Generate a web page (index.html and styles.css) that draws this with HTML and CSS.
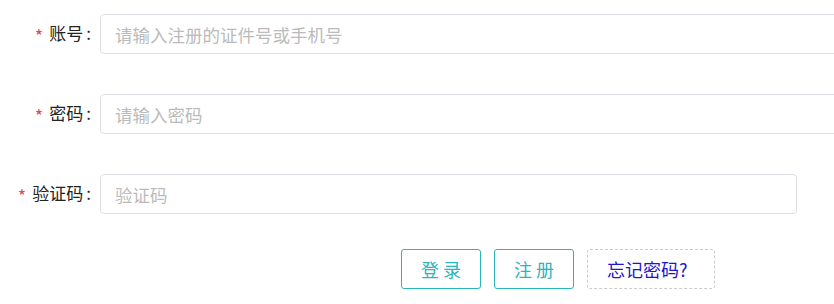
FILE: index.html
```html
<!DOCTYPE html>
<html lang="zh-CN">
<head>
  <meta charset="UTF-8" />
  <meta name="viewport" content="width=device-width, initial-scale=1.0"/>
  <title>登录</title>
  <link rel="stylesheet" href="styles.css">
</head>
<body>
  <form class="login-form" onsubmit="return false;">
    <div class="form-item">
      <label class="form-label" for="account"><span class="required">*</span>账号<span class="colon">:</span></label>
      <input class="form-input" id="account" type="text" placeholder="请输入注册的证件号或手机号">
    </div>

    <div class="form-item">
      <label class="form-label" for="password"><span class="required">*</span>密码<span class="colon">:</span></label>
      <input class="form-input" id="password" type="password" placeholder="请输入密码">
    </div>

    <div class="form-item">
      <label class="form-label" for="captcha"><span class="required">*</span>验证码<span class="colon">:</span></label>
      <input class="form-input captcha" id="captcha" type="text" placeholder="验证码">
    </div>

    <div class="form-actions">
      <button class="btn" type="submit">登 录</button>
      <button class="btn" type="button">注 册</button>
      <a class="btn-forgot" href="#">忘记密码?</a>
    </div>
  </form>
</body>
</html>
```

FILE: styles.css
```css
body {
  margin: 0;
  font-family: "Noto Sans CJK SC", "Microsoft YaHei", sans-serif;
  color: #333;
  background-color: #fff;
  overflow: hidden;
}

.login-form {
  width: 960px;
  padding-top: 14px;
}

.form-item {
  display: flex;
  align-items: center;
  margin-bottom: 40px;
}

.form-label {
  width: 91px;
  padding-right: 9px;
  text-align: right;
  font-size: 17px;
  color: #222;
}

.required {
  color: #e8464f;
  font-size: 18px;
  vertical-align: -3px;
  margin-right: 6px;
}

.colon {
  margin-left: 3px;
}

.form-input {
  flex: 1;
  height: 40px;
  box-sizing: border-box;
  padding: 0 14px;
  border: 1px solid #dcdfe6;
  border-radius: 4px;
  font-family: inherit;
  font-size: 17.5px;
  color: #333;
  outline: none;
}

.form-input::placeholder {
  color: #bbb;
}

.form-input.captcha {
  flex: none;
  width: 697px;
}

.form-actions {
  display: flex;
  align-items: center;
  gap: 13px;
  margin-top: -5px;
  padding-left: 401px;
}

.btn {
  width: 80px;
  height: 40px;
  box-sizing: border-box;
  border: 1px solid #2bb5bb;
  border-radius: 3px;
  background-color: #fff;
  color: #2bb5bb;
  font-family: inherit;
  font-size: 18px;
  cursor: pointer;
}

.btn-forgot {
  display: flex;
  align-items: center;
  width: 128px;
  height: 40px;
  box-sizing: border-box;
  padding-left: 19px;
  border: 1px dashed #ccc;
  border-radius: 3px;
  color: #2414cc;
  font-size: 18px;
  text-decoration: none;
}
```
